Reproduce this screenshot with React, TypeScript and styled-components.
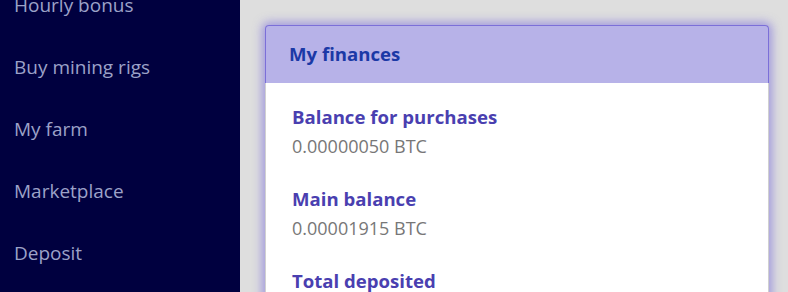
import styled, { createGlobalStyle } from "styled-components"

const GlobalStyle = createGlobalStyle`
  html, body {
    margin: 0;
    padding: 0;
    background: #dedede;
    font-family: "Open Sans", "Noto Sans", sans-serif;
  }
`

const Layout = styled.div`
  display: flex;
  height: 292px;
  overflow: hidden;
`

const Sidebar = styled.nav`
  width: 240px;
  flex-shrink: 0;
  background: #00003f;
  display: flex;
  flex-direction: column;
  gap: 37px;
  padding: 0 0 0 14px;
  margin-top: -7px;
  box-sizing: border-box;
`

const NavLink = styled.a`
  color: #9ca2c8;
  font-size: 19px;
  line-height: 25px;
  text-decoration: none;
`

const Main = styled.main`
  flex: 1;
  padding: 25px 19px 0 25px;
`

const Card = styled.section`
  background: #fff;
  border: 1px solid #d0d0d0;
  border-radius: 4px;
  box-shadow: 0 0 10px 3px rgba(110, 95, 220, 0.55);
`

const CardHeader = styled.header`
  background: #b7b2e8;
  border: 1px solid #7b6fd8;
  border-bottom: none;
  border-radius: 4px 4px 0 0;
  margin: -1px -1px 0;
  height: 58px;
  display: flex;
  align-items: center;
  padding: 0 23px 2px;
  box-sizing: border-box;
`

const Title = styled.h2`
  margin: 0;
  color: #1b39a6;
  font-size: 18.6px;
  font-weight: 700;
`

const CardBody = styled.div`
  padding: 22px 26px;
  display: flex;
  flex-direction: column;
  gap: 29px;
`

const Stat = styled.div`
  display: flex;
  flex-direction: column;
  gap: 5px;
`

const Label = styled.div`
  color: #4a3fb0;
  font-size: 18.6px;
  font-weight: 700;
  line-height: 24px;
`

const Value = styled.div`
  color: #777;
  font-size: 18px;
  line-height: 24px;
`

const links = ["Hourly bonus", "Buy mining rigs", "My farm", "Marketplace", "Deposit"]

const stats = [
  { label: "Balance for purchases", value: "0.00000050 BTC" },
  { label: "Main balance", value: "0.00001915 BTC" },
  { label: "Total deposited", value: "0.00000000 BTC" },
]

export default function App() {
  return (
    <>
      <GlobalStyle />
      <Layout>
        <Sidebar>
          {links.map((l) => (
            <NavLink key={l} href="#">
              {l}
            </NavLink>
          ))}
        </Sidebar>
        <Main>
          <Card>
            <CardHeader>
              <Title>My finances</Title>
            </CardHeader>
            <CardBody>
              {stats.map((s) => (
                <Stat key={s.label}>
                  <Label>{s.label}</Label>
                  <Value>{s.value}</Value>
                </Stat>
              ))}
            </CardBody>
          </Card>
        </Main>
      </Layout>
    </>
  )
}
